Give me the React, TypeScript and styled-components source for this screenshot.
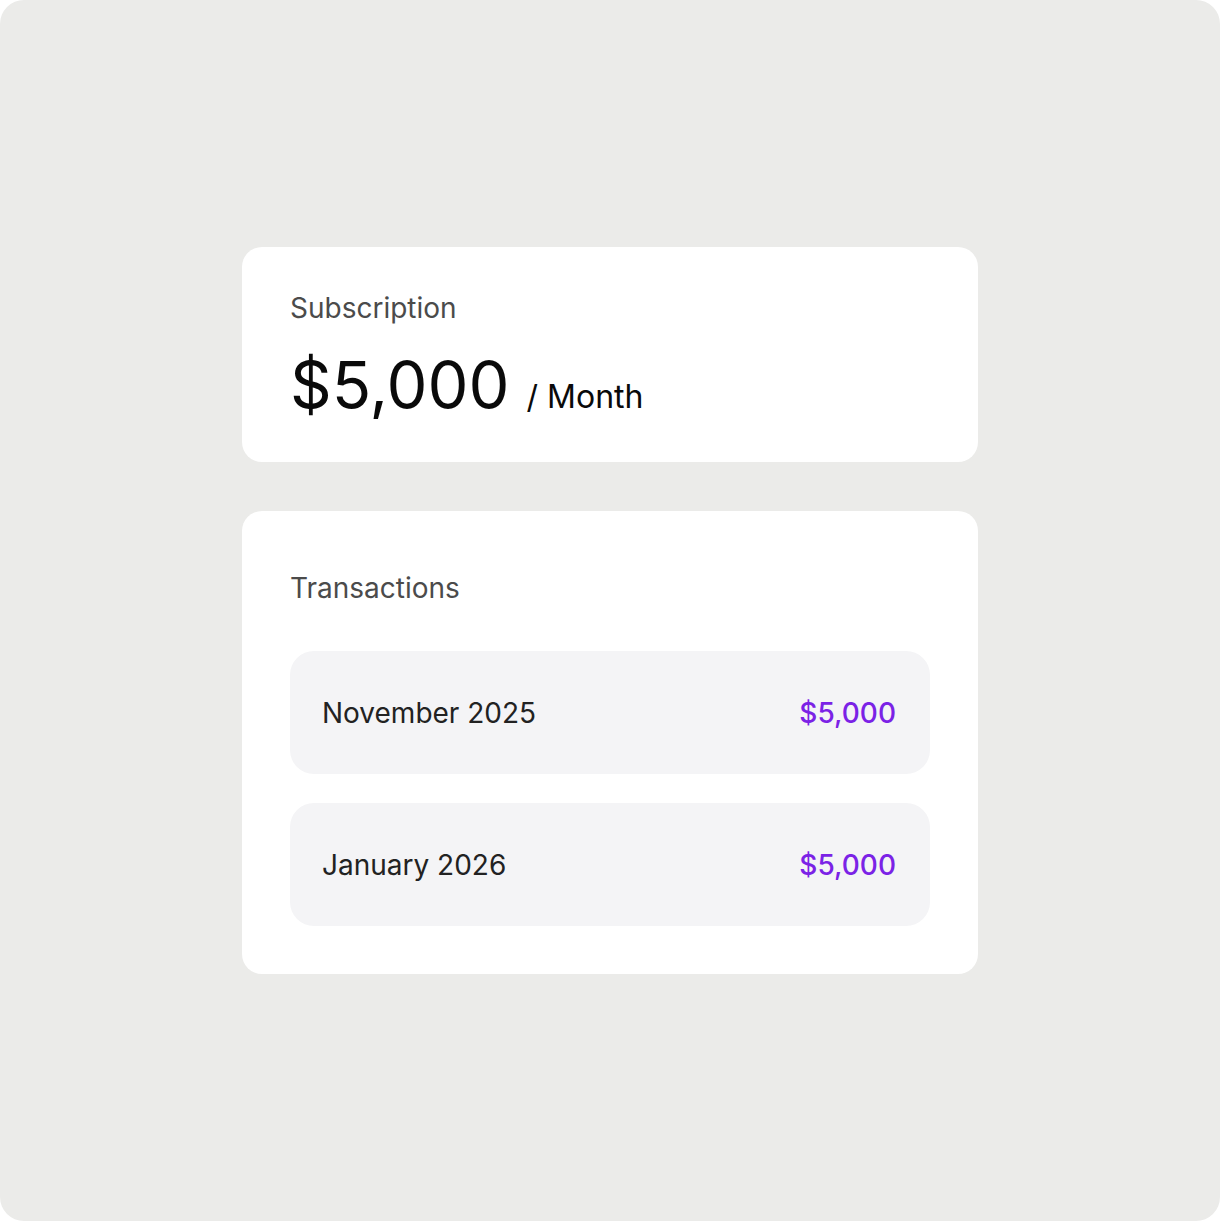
import styled, { createGlobalStyle } from 'styled-components';

const GlobalStyle = createGlobalStyle`
  html, body {
    margin: 0;
    padding: 0;
    background: #ffffff;
  }

  body {
    font-family: Inter, 'Noto Sans', 'Liberation Sans', sans-serif;
    -webkit-font-smoothing: antialiased;
  }
`;

type Transaction = {
  label: string;
  amount: string;
};

const transactions: Transaction[] = [
  { label: 'November 2025', amount: '$5,000' },
  { label: 'January 2026', amount: '$5,000' },
];

const App = () => {
  return (
    <>
      <GlobalStyle />
      <SFrame>
        <SStack>
          <SCard $padding='44px 48px 44px'>
            <SLabel>Subscription</SLabel>
            <SPriceRow>
              <SPrice>$5,000</SPrice>
              <SPeriod>/ Month</SPeriod>
            </SPriceRow>
          </SCard>

          <SCard $padding='60px 48px 48px'>
            <SLabel>Transactions</SLabel>
            <SList>
              {transactions.map((t) => (
                <SRow key={t.label}>
                  <SRowLabel>{t.label}</SRowLabel>
                  <SRowAmount>{t.amount}</SRowAmount>
                </SRow>
              ))}
            </SList>
          </SCard>
        </SStack>
      </SFrame>
    </>
  );
};

export default App;

const SFrame = styled.div`
  display: flex;
  align-items: center;
  justify-content: center;

  width: 1220px;
  height: 1221px;
  box-sizing: border-box;

  background-color: #ebebe9;
  border-radius: 24px;
`;

const SStack = styled.div`
  display: flex;
  flex-direction: column;

  gap: 49px;
  width: 736px;
`;

const SCard = styled.div<{ $padding: string }>`
  display: flex;
  flex-direction: column;

  padding: ${(p) => p.$padding};
  background-color: #ffffff;
  border-radius: 20px;
`;

const SLabel = styled.div`
  font-size: 28px;
  line-height: 34px;
  color: #4b4b4b;
`;

const SPriceRow = styled.div`
  display: flex;
  flex-direction: row;
  align-items: baseline;

  gap: 17px;
  margin-top: 27px;
`;

const SPrice = styled.div`
  font-size: 65px;
  line-height: 66px;
  color: #0a0a0a;
`;

const SPeriod = styled.div`
  font-size: 32px;
  line-height: 40px;
  color: #0a0a0a;
`;

const SList = styled.div`
  display: flex;
  flex-direction: column;

  gap: 29px;
  margin-top: 46px;
`;

const SRow = styled.div`
  display: flex;
  flex-direction: row;
  align-items: center;
  justify-content: space-between;

  height: 123px;
  padding: 0 34px 0 32px;
  box-sizing: border-box;

  background-color: #f4f4f6;
  border-radius: 24px;
`;

const SRowLabel = styled.div`
  font-size: 28px;
  color: #222222;
`;

const SRowAmount = styled.div`
  font-size: 28px;
  font-weight: 500;
  color: #7b22e6;
`;
